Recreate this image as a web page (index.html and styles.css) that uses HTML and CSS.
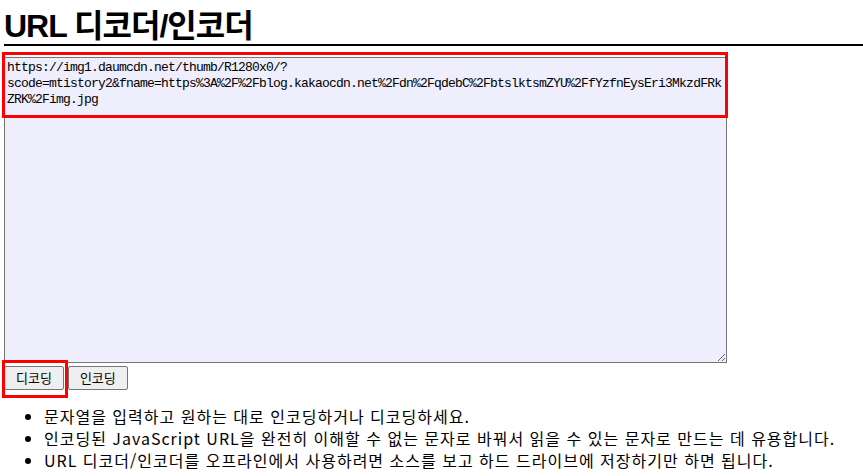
FILE: index.html
```html
<!DOCTYPE html>
<html lang="ko">
<head>
  <meta charset="UTF-8">
  <title>URL 디코더/인코더</title>
  <link rel="stylesheet" href="styles.css">
</head>
<body>
  <h1>URL 디코더/인코더</h1>

  <div class="editor">
    <textarea id="url" spellcheck="false">https://img1.daumcdn.net/thumb/R1280x0/?scode=mtistory2&amp;fname=https%3A%2F%2Fblog.kakaocdn.net%2Fdn%2FqdebC%2FbtslktsmZYU%2FfYzfnEysEri3MkzdFRkZRK%2Fimg.jpg</textarea>
    <div class="mark mark-text"></div>
  </div>

  <div class="botones">
    <button onclick="decodificar()">디코딩</button>
    <button onclick="codificar()">인코딩</button>
    <div class="mark mark-btn"></div>
  </div>

  <ul class="ayuda">
    <li>문자열을 입력하고 원하는 대로 인코딩하거나 디코딩하세요.</li>
    <li>인코딩된 JavaScript URL을 완전히 이해할 수 없는 문자로 바꿔서 읽을 수 있는 문자로 만드는 데 유용합니다.</li>
    <li>URL 디코더/인코더를 오프라인에서 사용하려면 소스를 보고 하드 드라이브에 저장하기만 하면 됩니다.</li>
  </ul>

  <script>
    function decodificar() {
      const campo = document.getElementById("url");
      try {
        campo.value = decodeURIComponent(campo.value.replace(/\+/g, ' '));
      } catch (e) {
        console.error("디코딩 실패: ", e);
      }
    }

    function codificar() {
      const campo = document.getElementById("url");
      campo.value = encodeURIComponent(campo.value);
    }
  </script>
</body>
</html>
```

FILE: styles.css
```css
body {
  margin: 0;
  padding: 0 0 0 4px;
  font-family: 'Noto Sans CJK KR', sans-serif;
  color: #000;
  background: #fff;
}

h1 {
  margin: 9px 0 0;
  font-family: 'Liberation Sans', 'Noto Sans CJK KR', sans-serif;
  font-size: 32px;
  font-weight: bold;
  line-height: 35px;
  letter-spacing: -1px;
  border-bottom: 2px solid #000;
}

.editor {
  position: relative;
  margin-top: 11px;
  width: 723px;
}

textarea {
  display: block;
  box-sizing: border-box;
  width: 723px;
  height: 306px;
  margin: 0;
  padding: 2px;
  border: 1px solid #767676;
  background: #eeeefc;
  font-family: 'Liberation Mono', monospace;
  font-size: 13px;
  letter-spacing: -0.8px;
  line-height: 16px;
  color: #000;
}

.botones {
  position: relative;
  display: flex;
  gap: 4px;
  margin-top: 3px;
}

button {
  box-sizing: border-box;
  height: 24px;
  padding: 1px 11px;
  border: 1px solid #767676;
  border-radius: 2px;
  background: #efefef;
  font-family: 'Noto Sans CJK KR', sans-serif;
  font-size: 13px;
  line-height: 18px;
  color: #000;
  cursor: pointer;
}

button:hover {
  background: #e5e5e5;
}

/* recuadros rojos de la captura */
.mark {
  position: absolute;
  box-sizing: border-box;
  border: 3px solid #ff0000;
  pointer-events: none;
}

.mark-text {
  left: -2px;
  top: -5px;
  width: 726px;
  height: 66px;
}

.mark-btn {
  left: -2px;
  top: -6px;
  width: 66px;
  height: 38px;
}

.ayuda {
  margin: 15px 0 0;
  padding-left: 40px;
  font-size: 16px;
  line-height: 22px;
  letter-spacing: 1px;
}
```
